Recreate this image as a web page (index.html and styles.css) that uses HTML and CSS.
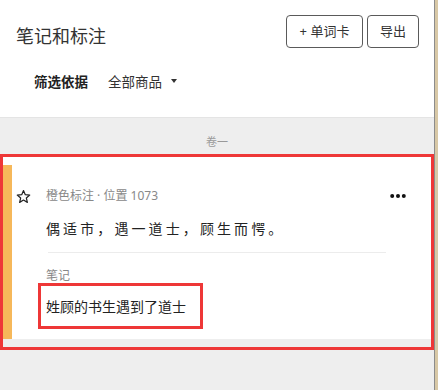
FILE: index.html
```html
<!DOCTYPE html>
<html lang="zh-CN">
<head>
<meta charset="utf-8">
<title>笔记和标注</title>
<link rel="stylesheet" href="styles.css">
</head>
<body>
<div class="screen">
  <div class="page">
    <header class="header">
      <div class="title-row">
        <h1 class="title">笔记和标注</h1>
        <div class="actions">
          <button class="btn btn-card">+ 单词卡</button>
          <button class="btn btn-export">导出</button>
        </div>
      </div>
      <div class="filter-row">
        <span class="filter-label">筛选依据</span>
        <span class="filter-value">全部商品</span>
        <span class="caret"></span>
      </div>
    </header>
    <section class="list">
      <div class="volume">卷一</div>
      <div class="mark-box">
        <article class="card">
          <div class="bar"></div>
          <div class="main">
            <div class="meta-row">
              <span class="star">
                <svg width="15" height="15" viewBox="0 0 24 24"><path d="M12 2.5l2.85 6.6 7.15.6-5.45 4.7 1.65 7-6.2-3.75-6.2 3.75 1.65-7L2 9.7l7.15-.6z" fill="none" stroke="#222" stroke-width="1.9" stroke-linejoin="round"/></svg>
              </span>
              <span class="meta">橙色标注 · 位置 1073</span>
              <span class="more">
                <svg width="16" height="6" viewBox="0 0 16 6"><circle cx="2.2" cy="3" r="2"/><circle cx="8" cy="3" r="2"/><circle cx="13.8" cy="3" r="2"/></svg>
              </span>
            </div>
            <p class="quote">偶适市，遇一道士，顾生而愕。</p>
            <div class="divider"></div>
            <div class="note-label">笔记</div>
            <div class="note-box"><span class="note">姓顾的书生遇到了道士</span></div>
          </div>
        </article>
      </div>
    </section>
  </div>
  <div class="scrollbar"></div>
</div>
</body>
</html>
```

FILE: styles.css
```css
* { box-sizing: border-box; }
html, body { margin: 0; padding: 0; }
body {
  font-family: "Noto Sans CJK SC", "Noto Sans", sans-serif;
  color: #333;
  background: #eeeeee;
}
.screen {
  display: flex;
  width: 438px;
  height: 390px;
  overflow: hidden;
}
.page {
  width: 434px;
  display: flex;
  flex-direction: column;
  background: #eeeeee;
}
.scrollbar {
  width: 4px;
  border-left: 1px solid #8c8c8c;
  background: #d8c8a6;
}
.header {
  height: 118px;
  background: #fff;
  border-bottom: 1px solid #e4e4e4;
  padding: 15px 15px 0 16px;
}
.title-row {
  display: flex;
  align-items: center;
  justify-content: space-between;
  height: 33px;
}
.title {
  margin: 7px 0 0 0;
  font-size: 18px;
  font-weight: 400;
  line-height: 22px;
  color: #333;
}
.actions {
  display: flex;
  gap: 4px;
}
.btn {
  height: 33px;
  border: 1px solid #5a5a5a;
  border-radius: 4px;
  background: #fff;
  font-family: "Noto Sans", "Noto Sans CJK SC", sans-serif;
  font-size: 13px;
  color: #333;
  padding: 0;
  line-height: 31px;
}
.btn-card { width: 77px; }
.btn-export { width: 52px; }
.filter-row {
  display: flex;
  align-items: center;
  margin: 23px 0 0 18px;
  height: 20px;
  font-size: 13.5px;
  line-height: 20px;
}
.filter-label {
  font-weight: 700;
  color: #222;
}
.filter-value {
  margin-left: 20px;
  color: #333;
}
.caret {
  margin-left: 9px;
  width: 0;
  height: 0;
  border-left: 3.5px solid transparent;
  border-right: 3.5px solid transparent;
  border-top: 4px solid #333;
}
.list {
  flex: 1;
  display: flex;
  flex-direction: column;
}
.volume {
  height: 36px;
  padding-top: 16px;
  font-size: 11px;
  line-height: 14px;
  color: #999;
  text-align: center;
}
.mark-box {
  border: 3px solid #ee3737;
  padding-bottom: 8px;
  background: #eeeeee;
}
.card {
  display: flex;
  background: #fff;
}
.bar {
  width: 9px;
  margin-top: 8px;
  background: #f6b85a;
}
.main {
  flex: 1;
  padding: 31px 0 10px 0;
}
.meta-row {
  display: flex;
  align-items: center;
  height: 16px;
}
.star {
  width: 34px;
  padding-left: 4px;
  display: flex;
  align-items: center;
}
.star svg { display: block; }
.meta {
  flex: 1;
  font-family: "Noto Sans", "Noto Sans CJK SC", sans-serif;
  font-size: 12px;
  line-height: 16px;
  color: #888;
}
.more {
  width: 45px;
  padding-left: 4px;
  display: flex;
  align-items: center;
}
.more svg { display: block; fill: #111; }
.quote {
  margin: 14px 45px 0 34px;
  font-size: 14px;
  line-height: 20px;
  letter-spacing: 3.1px;
  color: #222;
}
.divider {
  margin: 14px 45px 0 36px;
  height: 1px;
  background: #ececec;
}
.note-label {
  margin: 14px 0 0 34px;
  font-size: 12px;
  line-height: 16px;
  color: #888;
}
.note-box {
  margin-left: 26px;
  width: 165px;
  height: 46px;
  border: 3px solid #ee3737;
  padding-left: 5px;
  display: flex;
  align-items: center;
}
.note {
  font-size: 14px;
  line-height: 20px;
  color: #222;
}
```
